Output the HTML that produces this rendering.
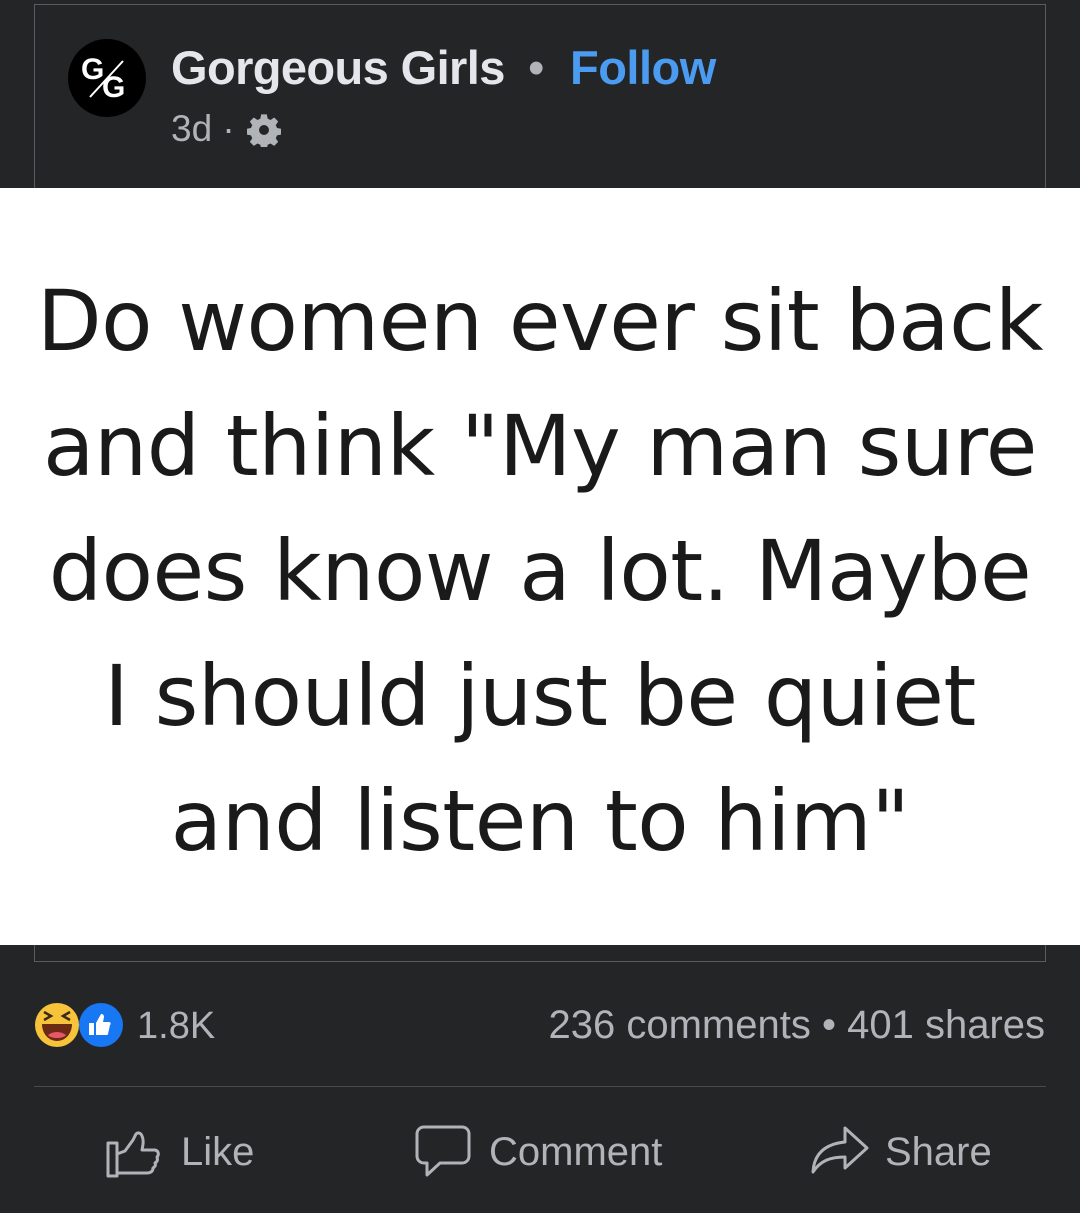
<!DOCTYPE html>
<html><head><meta charset="utf-8"><style>
body{margin:0;width:1080px;height:1213px;background:#242527;overflow:hidden;font-family:"Liberation Sans",sans-serif;position:relative}
.abs{position:absolute}
.box{left:34px;top:4px;width:1010px;height:184px;border:1px solid #5a5b5e;border-bottom:none}
.white{left:0;top:188px;width:1080px;height:757px;background:#fff}
.q{left:0;top:188px;width:1080px;text-align:center;font-family:"DejaVu Sans",sans-serif;font-size:84px;color:#1a1a1a;line-height:125px;padding-top:71px;letter-spacing:-0.5px;white-space:nowrap}
.box2{left:34px;top:945px;width:1010px;height:16px;border:1px solid #5a5b5e;border-top:none}
.name{left:171px;top:40px;font-size:47px;font-weight:bold;color:#e4e6eb;letter-spacing:-0.6px}
.follow{left:570px;top:40px;font-size:47px;font-weight:bold;color:#4b9bf0;letter-spacing:-0.5px}
.dot{left:528px;top:40px;font-size:47px;color:#b0b3b8}
.time{left:171px;top:108px;font-size:37px;color:#b0b3b8}
.stat{font-size:38px;color:#b0b3b8;top:1005px}
.sep{left:34px;top:1086px;width:1012px;height:1px;background:#4a4b4e}
.act{font-size:40px;color:#b0b3b8;top:1130px}
</style></head><body>
<div class="abs box"></div>
<svg class="abs" style="left:68px;top:39px" width="78" height="78" viewBox="0 0 78 78"><circle cx="39" cy="39" r="39" fill="#000"/><text x="13" y="40" font-family="Liberation Sans" font-weight="bold" font-size="30" fill="#fff">G</text><text x="34" y="58" font-family="Liberation Sans" font-weight="bold" font-size="30" fill="#fff">G</text><line x1="55" y1="22" x2="22" y2="58" stroke="#fff" stroke-width="2"/></svg>
<div class="abs name">Gorgeous Girls</div>
<div class="abs dot">•</div>
<div class="abs follow">Follow</div>
<div class="abs time">3d ·</div>
<svg class="abs" style="left:247px;top:113px" width="34" height="34" viewBox="0 0 24 24"><path fill="#b0b3b8" d="M10 1h4l.6 3 2 .9 2.6-1.7 2.8 2.8-1.7 2.6.9 2 3 .6v4l-3 .6-.9 2 1.7 2.6-2.8 2.8-2.6-1.7-2 .9-.6 3h-4l-.6-3-2-.9-2.6 1.7-2.8-2.8 1.7-2.6-.9-2-3-.6v-4l3-.6.9-2-1.7-2.6 2.8-2.8 2.6 1.7 2-.9zM12 8.5a3.5 3.5 0 1 0 0 7 3.5 3.5 0 0 0 0-7z"/></svg>
<div class="abs white"></div>
<div class="abs q">Do women ever sit back<br>and think "My man sure<br>does know a lot. Maybe<br>I should just be quiet<br>and listen to him"</div>
<div class="abs box2"></div>
<svg class="abs" style="left:33px;top:1002px" width="92" height="46" viewBox="0 0 92 46"><circle cx="68" cy="23" r="22" fill="#1877f2"/><path d="M56 21h5v12h-5zM63 21l5-9c2 0 3 1 3 3l-1 5h6c2 0 2 2 1 3l-2 9c0 1-1 1-2 1h-10z" fill="#fff"/><circle cx="24" cy="23" r="22" fill="#f7c33b"/><path d="M9 22h30c0 10-7 17-15 17S9 32 9 22z" fill="#6b2a14"/><path d="M15 33c5-4 13-4 18 0-3 4-15 4-18 0z" fill="#e9566a"/><path d="M11 10l7 4-7 4M37 10l-7 4 7 4" stroke="#3a2a1a" stroke-width="2.5" fill="none"/></svg>
<div class="abs stat" style="left:137px">1.8K</div>
<div class="abs stat" style="right:35px;font-size:40px;top:1003px">236 comments • 401 shares</div>
<div class="abs sep"></div>
<svg class="abs" style="left:104px;top:1121px" width="58" height="58" viewBox="0 0 58 58"><path d="M4 22h9v33H4zM13 52l30 0c4 0 6-2 6-5 2-1 3-3 2-5 2-1 3-3 2-6 2-2 2-6-2-7h-13c1-5 2-10 0-14-1-3-4-4-6-2l-3 6-8 11-8 3" fill="none" stroke="#b0b3b8" stroke-width="3" stroke-linejoin="round"/></svg>
<div class="abs act" style="left:181px">Like</div>
<svg class="abs" style="left:414px;top:1124px" width="58" height="56" viewBox="0 0 58 56"><path d="M10 3h38c4 0 7 3 7 7v22c0 4-3 7-7 7H26l-13 12v-12h-3c-4 0-7-3-7-7V10c0-4 3-7 7-7z" fill="none" stroke="#b0b3b8" stroke-width="3" stroke-linejoin="round"/></svg>
<div class="abs act" style="left:489px">Comment</div>
<svg class="abs" style="left:810px;top:1124px" width="60" height="52" viewBox="0 0 60 52"><path d="M35 4l22 20-22 20V33C20 33 10 37 3 48c1-18 12-28 32-30z" fill="none" stroke="#b0b3b8" stroke-width="3" stroke-linejoin="round"/></svg>
<div class="abs act" style="left:885px">Share</div>
</body></html>
